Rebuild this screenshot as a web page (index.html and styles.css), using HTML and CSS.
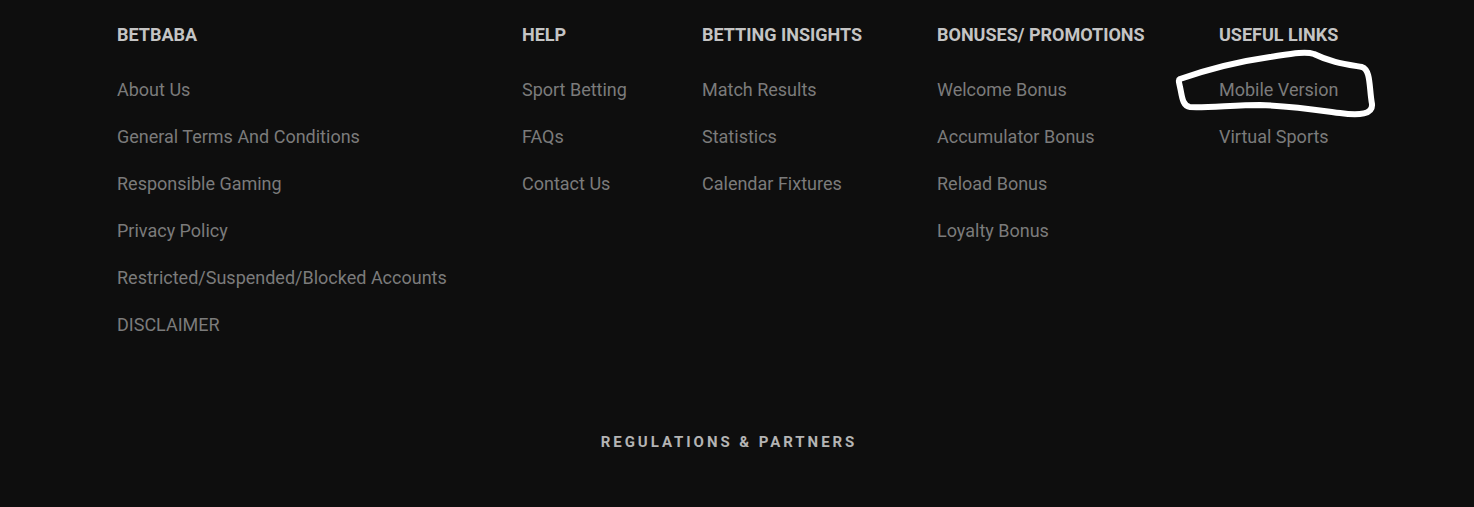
FILE: index.html
```html
<!DOCTYPE html>
<html>
<head>
<meta charset="utf-8">
<link rel="stylesheet" href="styles.css">
</head>
<body>
<footer class="footer">
  <div class="cols">
    <div class="col">
      <h4 class="col-title">BETBABA</h4>
      <ul class="links">
        <li>About Us</li>
        <li>General Terms And Conditions</li>
        <li>Responsible Gaming</li>
        <li>Privacy Policy</li>
        <li>Restricted/Suspended/Blocked Accounts</li>
        <li>DISCLAIMER</li>
      </ul>
    </div>
    <div class="col">
      <h4 class="col-title">HELP</h4>
      <ul class="links">
        <li>Sport Betting</li>
        <li>FAQs</li>
        <li>Contact Us</li>
      </ul>
    </div>
    <div class="col">
      <h4 class="col-title">BETTING INSIGHTS</h4>
      <ul class="links">
        <li>Match Results</li>
        <li>Statistics</li>
        <li>Calendar Fixtures</li>
      </ul>
    </div>
    <div class="col">
      <h4 class="col-title">BONUSES/ PROMOTIONS</h4>
      <ul class="links">
        <li>Welcome Bonus</li>
        <li>Accumulator Bonus</li>
        <li>Reload Bonus</li>
        <li>Loyalty Bonus</li>
      </ul>
    </div>
    <div class="col">
      <h4 class="col-title">USEFUL LINKS</h4>
      <ul class="links">
        <li>Mobile Version</li>
        <li>Virtual Sports</li>
      </ul>
    </div>
  </div>
  <div class="regs">REGULATIONS &amp; PARTNERS</div>
</footer>
<svg class="scribble" width="1474" height="507" viewBox="0 0 1474 507">
  <path d="M1180 79 C1200 72 1235 62 1270 57 C1290 54 1305 51 1314 54 C1330 62 1345 64 1362 67 C1371 70 1369 88 1372 104 C1373 114 1360 116 1340 113 C1310 109 1290 106 1260 105 C1235 105 1205 108 1190 107 C1182 106 1182 95 1180 87 C1179 82 1178 80 1180 79 Z" fill="none" stroke="#ffffff" stroke-width="6" stroke-linejoin="round" stroke-linecap="round"/>
</svg>
</body>
</html>
```

FILE: styles.css
```css
html, body {
  margin: 0;
  padding: 0;
  background: #0e0e0e;
}
body {
  font-family: Roboto, "Noto Sans", Arial, sans-serif;
  width: 1474px;
  height: 507px;
  overflow: hidden;
  position: relative;
}
.footer {
  padding: 25px 0 0 117px;
}
.cols {
  display: grid;
  grid-template-columns: 405px 180px 235px 282px 200px;
}
.col-title {
  margin: 0;
  font-size: 18px;
  line-height: 20px;
  font-weight: 700;
  color: #c4c4c4;
}
.links {
  list-style: none;
  margin: 21px 0 0;
  padding: 0;
}
.links li {
  font-size: 18px;
  line-height: 47px;
  color: #7b7b7b;
  white-space: nowrap;
}
.regs {
  margin-top: 84px;
  text-align: center;
  padding-right: 16px;
  margin-left: -117px;
  font-size: 15px;
  font-weight: 700;
  letter-spacing: 2.95px;
  color: #b4b4b4;
  line-height: 20px;
}
.scribble {
  position: absolute;
  left: 0;
  top: 0;
  pointer-events: none;
}
```
